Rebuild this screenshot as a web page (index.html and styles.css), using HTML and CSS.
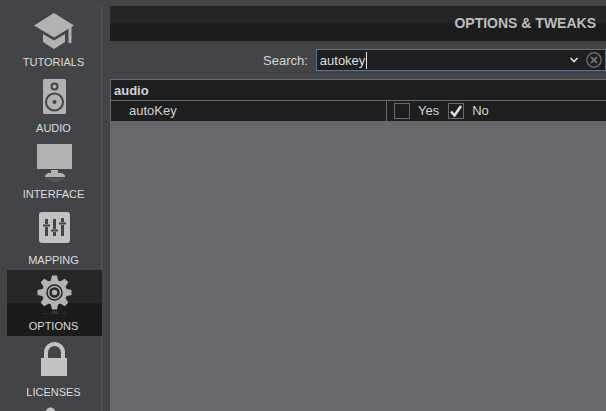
FILE: index.html
```
<!DOCTYPE html>
<html lang="en">
<head>
    <meta charset="utf-8">
    <title>Options &amp; Tweaks</title>
    <link rel="stylesheet" href="styles.css">
</head>
<body>
    <nav class="sidebar">
        <a href="#tutorials" class="tab">
            <svg class="icon" width="42" height="44" viewBox="0 0 42 44">
                <path d="M21 7 L41 19.5 L21 31.5 L1 19.5 Z"/>
                <path d="M10 28 L21 34.5 L32 28 V36 L21 43 L10 36 Z"/>
                <path d="M35.5 22 L38.5 20.5 V37 H35.5 Z"/>
            </svg>
            <span>TUTORIALS</span>
        </a>
        <a href="#audio" class="tab">
            <svg class="icon" width="42" height="44" viewBox="0 0 42 44">
                <rect x="10" y="7" width="23" height="35" rx="1.5"/>
                <circle class="line" cx="21.5" cy="14.5" r="3" stroke-width="2"/>
                <circle class="line" cx="21.5" cy="30" r="8.5" stroke-width="2"/>
                <circle class="hole" cx="21.5" cy="30" r="2"/>
            </svg>
            <span>AUDIO</span>
        </a>
        <a href="#interface" class="tab">
            <svg class="icon" width="42" height="44" viewBox="0 0 42 44">
                <rect x="4" y="6" width="35" height="25"/>
                <path d="M18 32 H25 V35 H29 L32 37.5 V39 H12 V37.5 L15 35 H18 Z"/>
                <path class="shade" d="M12 40 H32 L29 42 H26 V44 H18 V42 H15 Z"/>
            </svg>
            <span>INTERFACE</span>
        </a>
        <a href="#mapping" class="tab">
            <svg class="icon" width="42" height="44" viewBox="0 0 42 44">
                <rect class="bright" x="6" y="8" width="31" height="31" rx="3"/>
                <path class="line" stroke-width="3" d="M13.5 15 V20 M13.5 23 V32 M21.5 15 V25 M21.5 28 V32 M29.5 14 V18 M29.5 21 V32"/>
                <path class="line" stroke-width="2" d="M10 21.5 H17 M18 26.5 H25 M26 19.5 H33"/>
            </svg>
            <span>MAPPING</span>
        </a>
        <a href="#options" class="tab active">
            <svg class="icon" width="42" height="44" viewBox="0 0 42 44">
                <g id="gear">
                    <circle cx="21.5" cy="22.5" r="12.5"/>
                    <path id="teeth" d="M17.5 12 L19 5.5 H24 L25.5 12 Z M17.5 33 L19 39.5 H24 L25.5 33 Z"/>
                    <use href="#teeth" transform="rotate(45 21.5 22.5)"/>
                    <use href="#teeth" transform="rotate(90 21.5 22.5)"/>
                    <use href="#teeth" transform="rotate(135 21.5 22.5)"/>
                </g>
                <circle class="line" cx="21.5" cy="22.5" r="7.5" stroke-width="1.5"/>
                <circle class="line" cx="21.5" cy="22.5" r="4" stroke-width="2.5"/>
                <path class="shade" d="M19 41 H24 L25 44 H18 Z M10 43 H14 V44 H10 Z M29 43 H33 V44 H29 Z"/>
            </svg>
            <span>OPTIONS</span>
        </a>
        <a href="#licenses" class="tab">
            <svg class="icon" width="42" height="44" viewBox="0 0 42 44">
                <rect class="bright" x="8" y="22" width="26" height="18"/>
                <path class="shackle" d="M13 23 V17 C13 5 30 5 30 17 V23"/>
            </svg>
            <span>LICENSES</span>
        </a>
        <a href="#info" class="tab" aria-label="Info">
            <svg class="icon" width="42" height="44" viewBox="0 0 42 44">
                <circle class="bright" cx="17.5" cy="10" r="4.5"/>
                <rect class="bright" x="13" y="17" width="9" height="24"/>
            </svg>
        </a>
    </nav>

    <main class="content">
        <h1>OPTIONS &amp; TWEAKS</h1>

        <div class="search">
            <label for="search">Search:</label>
            <div class="search-box">
                <input type="text" id="search" value="autokey">
                <span class="caret"></span>
                <button type="button" aria-label="History">
                    <svg width="10" height="8" viewBox="0 0 10 8">
                        <path d="M1.5 2 L5 5.5 L8.5 2" fill="none" stroke="#e0e0e0" stroke-width="1.6"/>
                    </svg>
                </button>
                <button type="button" aria-label="Clear">
                    <svg width="18" height="18" viewBox="0 0 18 18" fill="none" stroke="#6c6c6e">
                        <circle cx="9" cy="9" r="7.2" stroke-width="1.5"/>
                        <path d="M6 6 L12 12 M12 6 L6 12" stroke-width="2"/>
                    </svg>
                </button>
            </div>
        </div>

        <div class="results">
            <table>
                <colgroup>
                    <col class="name-col">
                    <col>
                </colgroup>
                <tr>
                    <th colspan="2">audio</th>
                </tr>
                <tr>
                    <td class="name">autoKey</td>
                    <td>
                        <div class="choices">
                            <label><input type="checkbox"> Yes</label>
                            <label><input type="checkbox" checked> No</label>
                        </div>
                    </td>
                </tr>
            </table>
        </div>
    </main>
</body>
</html>
```

FILE: styles.css
```
* {
    box-sizing: border-box;
}

body {
    font-family: "Liberation Sans", Arial, sans-serif;
    font-size: 13px;
    background-color: #434447;
    color: #d4d4d4;
    display: flex;
    height: 100vh;
    margin: 0;
    padding-top: 6px;
    overflow: hidden;
}

.sidebar {
    flex: none;
    width: 102px;
    padding-left: 7px;
    overflow: hidden;
    background: linear-gradient(#56575a, #56575a) right / 1px 100% no-repeat;
}

.tab {
    display: flex;
    flex-direction: column;
    align-items: center;
    height: 66px;
    padding-right: 2px;
    font-size: 11px;
    line-height: 12px;
    color: #dcdcdc;
    text-decoration: none;
}

.tab span {
    margin-top: 6px;
}

.tab.active {
    background: linear-gradient(#262627 50%, #1b1b1c 50%);
}

.icon {
    fill: #b2b2b3;
}

.icon .line {
    fill: none;
    stroke: #434447;
}

.icon .hole {
    fill: #434447;
}

.icon .bright {
    fill: #c2c2c3;
}

.icon .shade {
    fill: #888;
    opacity: 0.25;
}

.icon .shackle {
    fill: none;
    stroke: #c2c2c3;
    stroke-width: 4;
}

.active .icon .line {
    stroke: #262627;
}

.content {
    flex: 1;
    display: flex;
    flex-direction: column;
    margin-left: 8px;
}

h1 {
    margin: 0;
    padding-right: 10px;
    font-size: 14px;
    line-height: 35px;
    text-align: right;
    color: #bcbcbc;
    background: linear-gradient(#252526 50%, #1c1c1d 50%);
}

.search {
    display: flex;
    align-items: center;
    gap: 8px;
    margin: 8px 0;
    padding-left: 153px;
}

.search-box {
    flex: 1;
    display: flex;
    align-items: center;
    position: relative;
    height: 22px;
    padding-right: 2px;
    border: 1px solid #5c7089;
    background-color: #1d1e20;
}

.search-box input {
    flex: 1;
    min-width: 0;
    height: 20px;
    padding: 0 3px;
    border: none;
    outline: none;
    background: none;
    font: inherit;
    color: #dedede;
}

/* text cursor after the typed word */
.caret {
    position: absolute;
    left: 49px;
    top: 2px;
    width: 1px;
    height: 17px;
    background-color: #e8e8e8;
}

.search-box button {
    display: flex;
    align-items: center;
    padding: 0;
    border: none;
    background: none;
    cursor: pointer;
}

.search-box button + button {
    margin-left: 6px;
}

.results {
    flex: 1;
    background-color: #68676c;
}

table {
    width: 100%;
    table-layout: fixed;
    border-collapse: collapse;
    background-color: #1d1e20;
}

th, td {
    padding: 0;
    text-align: left;
    border-top: 1px solid #6b6b6e;
    border-left: 1px solid #6b6b6e;
}

th {
    height: 21px;
    padding-left: 3px;
}

td {
    height: 20px;
    padding-left: 7px;
}

.name-col {
    width: 276px;
}

.name {
    padding-left: 18px;
}

.choices {
    display: flex;
    gap: 9px;
}

.choices label {
    display: flex;
    align-items: center;
    gap: 8px;
}

.choices input {
    appearance: none;
    width: 16px;
    height: 16px;
    margin: 0;
    border: 1px solid #6b6b6e;
}

.choices input:checked {
    background: url("data:image/svg+xml,%3Csvg xmlns='http://www.w3.org/2000/svg' viewBox='0 0 14 14'%3E%3Cpath d='M2 7.5 L5.5 11.5 L12 2' fill='none' stroke='%23e0e0e0' stroke-width='2.6'/%3E%3C/svg%3E") center / 14px 14px no-repeat;
}
```
